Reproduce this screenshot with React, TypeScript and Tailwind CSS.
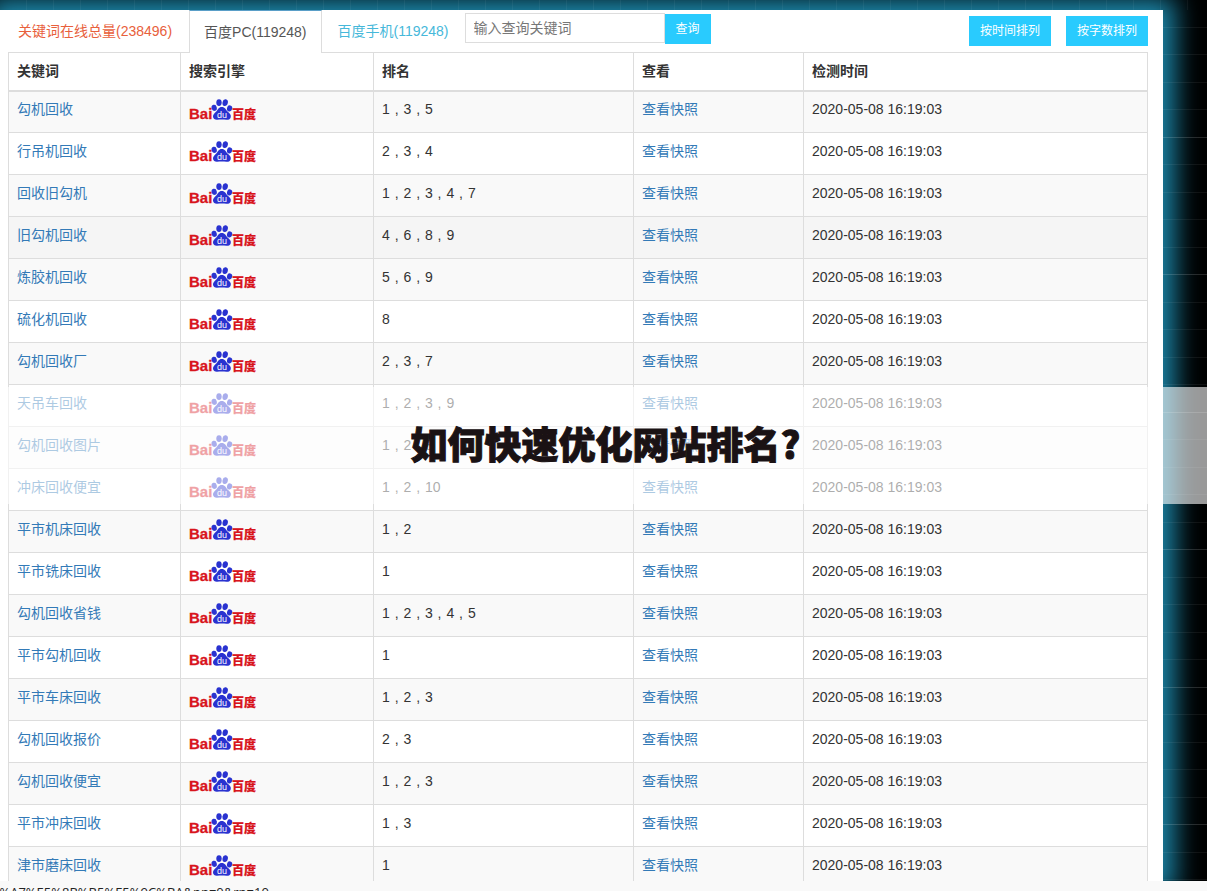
import React, { useState } from 'react';

interface KeywordRow {
  keyword: string;
  ranks: number[];
}

const CHECKED_AT = '2020-05-08 16:19:03';

const rows: KeywordRow[] = [
  { keyword: '勾机回收', ranks: [1, 3, 5] },
  { keyword: '行吊机回收', ranks: [2, 3, 4] },
  { keyword: '回收旧勾机', ranks: [1, 2, 3, 4, 7] },
  { keyword: '旧勾机回收', ranks: [4, 6, 8, 9] },
  { keyword: '炼胶机回收', ranks: [5, 6, 9] },
  { keyword: '硫化机回收', ranks: [8] },
  { keyword: '勾机回收厂', ranks: [2, 3, 7] },
  { keyword: '天吊车回收', ranks: [1, 2, 3, 9] },
  { keyword: '勾机回收图片', ranks: [1, 2, 3] },
  { keyword: '冲床回收便宜', ranks: [1, 2, 10] },
  { keyword: '平市机床回收', ranks: [1, 2] },
  { keyword: '平市铣床回收', ranks: [1] },
  { keyword: '勾机回收省钱', ranks: [1, 2, 3, 4, 5] },
  { keyword: '平市勾机回收', ranks: [1] },
  { keyword: '平市车床回收', ranks: [1, 2, 3] },
  { keyword: '勾机回收报价', ranks: [2, 3] },
  { keyword: '勾机回收便宜', ranks: [1, 2, 3] },
  { keyword: '平市冲床回收', ranks: [1, 3] },
  { keyword: '津市磨床回收', ranks: [1] },
];

const BaiduLogo: React.FC = () => (
  <svg viewBox="0 0 67 24" className="block w-[67px] h-6" role="img" aria-label="Baidu">
    <text x="0" y="21" fill="#d8141c" stroke="#d8141c" strokeWidth="0.3" fontSize="15" fontWeight="700" fontFamily="Liberation Sans, sans-serif">Bai</text>
    <g fill="#2932d0">
      <ellipse cx="25.2" cy="9.8" rx="2.6" ry="3.1" transform="rotate(-14 25.2 9.8)" />
      <ellipse cx="30" cy="4.6" rx="2.7" ry="3.4" />
      <ellipse cx="36.2" cy="4.6" rx="2.7" ry="3.4" transform="rotate(10 36.2 4.6)" />
      <ellipse cx="40.6" cy="10.4" rx="2.6" ry="3.1" transform="rotate(14 40.6 10.4)" />
      <path d="M32.8 9c3.2 0 4 2.8 5.8 4.6 1.8 1.8 3.6 3 3.2 5.4-.4 2.2-2.4 3-4.4 2.8-1.6-.2-3-.4-4.6-.4s-3 .2-4.6.4c-2 .2-4-.8-4.2-3-.2-2.2 1.6-3.4 3.2-5.2 1.8-1.8 2.4-4.6 5.6-4.6z" />
    </g>
    <text x="28" y="20" fill="#fff" fontSize="9" fontFamily="Liberation Sans, sans-serif">du</text>
    <text x="43" y="21" fill="#d8141c" stroke="#d8141c" strokeWidth="0.2" fontSize="12" fontWeight="900" fontFamily="Noto Sans CJK SC, sans-serif">百度</text>
  </svg>
);

const App: React.FC = () => {
  const [query, setQuery] = useState('');

  const cell = 'border border-[#ddd] px-2';
  const head = 'border border-b-2 border-[#ddd] px-2 h-[38px] text-left font-bold';
  const action = 'h-[30px] px-[11px] bg-[#29cbfe] text-white text-xs';

  return (
    <div className="relative h-screen flex flex-col overflow-hidden bg-black text-sm text-[#333] font-['Liberation_Sans','Noto_Sans_CJK_SC',sans-serif]">
      <main className="relative flex-1 min-h-0 overflow-hidden pt-[10px] pr-11">
        <div className="bg-white h-full px-2 shadow-[0_0_24px_12px_#1c86a8]">
          <div className="flex items-start justify-between">
            <div className="flex items-start">
              <nav className="flex h-[42px] leading-5">
                <a href="#all" className="px-[10px] pt-[11px] text-[#e8603c]">关键词在线总量(238496)</a>
                <a href="#pc" className="relative z-10 ml-[7px] px-[14px] pt-[11px] h-[43px] bg-white border-x border-t border-x-[#ddd] border-t-[#5a9fc8] text-[#555]">百度PC(119248)</a>
                <a href="#mobile" className="px-4 pt-[11px] text-[#46b8da]">百度手机(119248)</a>
              </nav>
              <form className="flex pt-[3px]" onSubmit={(e) => e.preventDefault()}>
                <input
                  type="text"
                  aria-label="输入查询关键词"
                  placeholder="输入查询关键词"
                  value={query}
                  onChange={(e) => setQuery(e.target.value)}
                  className="w-[200px] h-[30px] px-2 border border-[#ddd] placeholder:text-[#777] outline-none"
                />
                <button type="submit" className="mt-px h-[30px] px-[11px] bg-[#29cbfe] text-white text-xs">查询</button>
              </form>
            </div>
            <div className="flex gap-[15px] pt-[6px] pr-[7px]">
              <button className={action}>按时间排列</button>
              <button className={action}>按字数排列</button>
            </div>
          </div>

          <div className="pr-[7px]">
            <table className="w-full table-fixed border-collapse">
              <colgroup>
                <col className="w-[172px]" />
                <col className="w-[193px]" />
                <col className="w-[260px]" />
                <col className="w-[170px]" />
                <col />
              </colgroup>
              <thead>
                <tr>
                  <th className={head}>关键词</th>
                  <th className={head}>搜索引擎</th>
                  <th className={head}>排名</th>
                  <th className={head}>查看</th>
                  <th className={head}>检测时间</th>
                </tr>
              </thead>
              <tbody>
                {rows.map((row) => (
                  <tr key={row.keyword} className="h-[42px] odd:bg-[#f9f9f9] nth-[4]:bg-[#f5f5f5]">
                    <td className={cell}>
                      <a href="#keyword" className="block pb-[6px] text-[#337ab7]">{row.keyword}</a>
                    </td>
                    <td className={cell}>
                      <div className="pb-[3px]">
                        <BaiduLogo />
                      </div>
                    </td>
                    <td className={cell}>
                      <span className="block pb-[6px]">
                        {row.ranks.map((rank, i) => (
                          <React.Fragment key={rank}>
                            {i > 0 && <span className="px-px"> , </span>}
                            {rank}
                          </React.Fragment>
                        ))}
                      </span>
                    </td>
                    <td className={cell}>
                      <a href="#snapshot" className="block pb-[6px] text-[#337ab7]">查看快照</a>
                    </td>
                    <td className={cell}>
                      <span className="block pb-[6px]">{CHECKED_AT}</span>
                    </td>
                  </tr>
                ))}
              </tbody>
            </table>
          </div>
        </div>

        {/* faint grid over the dark margins */}
        <div className="pointer-events-none absolute top-0 inset-x-0 h-[10px] bg-[repeating-linear-gradient(90deg,transparent_0_26px,#ffffff0c_26px_27px)]" />
        <div className="pointer-events-none absolute inset-y-0 right-0 w-11 bg-[repeating-linear-gradient(180deg,transparent_0_27px,#ffffff10_27px_28px,transparent_28px_54px,#ffffff10_54px_55px),repeating-linear-gradient(180deg,transparent_0_137px,#ffffff18_137px_138px,transparent_138px_274px,#ffffff18_274px_275px)]" />
      </main>

      <footer className="h-[10px] overflow-hidden bg-[#f9f9f9] text-[13px] leading-4 text-[#222] font-['Open_Sans',sans-serif]">
        <p className="-indent-2 pt-[3px] whitespace-nowrap">7%A7%E5%8B%B5%E5%9C%BA&amp;pn=0&amp;rn=10</p>
      </footer>

      <div className="absolute inset-x-0 top-[387px] h-[117px] flex items-center justify-center pb-1 pl-1 bg-white/60">
        <h1 className="text-[37px] leading-none font-black text-[#1a1214] [-webkit-text-stroke:1px_#1a1214] font-['Noto_Sans_CJK_SC',sans-serif]">如何快速优化网站排名?</h1>
      </div>
    </div>
  );
};

export default App;
